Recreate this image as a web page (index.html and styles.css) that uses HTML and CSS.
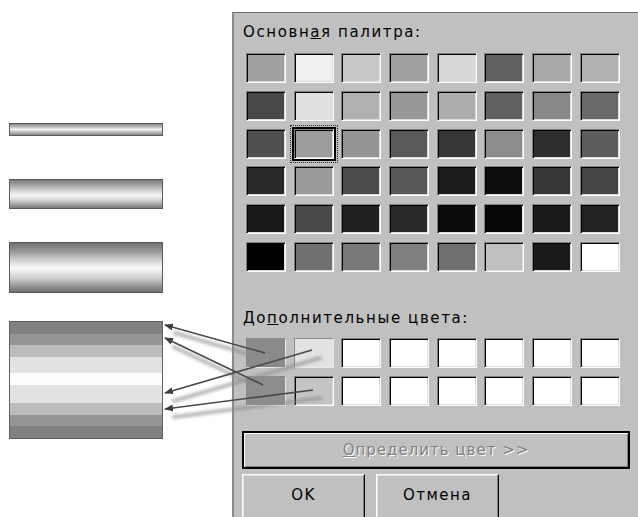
FILE: index.html
```html
<!DOCTYPE html>
<html lang="ru">

<head>
    <meta charset="utf-8" />
    <title>Цвет</title>
    <link rel="stylesheet" href="styles.css">
</head>

<body>
    <div class="page">
        <div class="bars">
            <div class="bar bar-xs"></div>
            <div class="bar bar-s"></div>
            <div class="bar bar-m"></div>
            <div class="bar bar-l"></div>
        </div>

        <div class="dialog">
            <div class="caption">Основн<u>а</u>я палитра:</div>
            <div class="grid basic">
                <!-- row 1 -->
                <div class="sw" style="background:#a0a0a0"></div>
                <div class="sw" style="background:#f0f0f0"></div>
                <div class="sw" style="background:#c8c8c8"></div>
                <div class="sw" style="background:#a0a0a0"></div>
                <div class="sw" style="background:#d8d8d8"></div>
                <div class="sw" style="background:#606060"></div>
                <div class="sw" style="background:#a8a8a8"></div>
                <div class="sw" style="background:#b0b0b0"></div>
                <!-- row 2 -->
                <div class="sw" style="background:#484848"></div>
                <div class="sw" style="background:#e0e0e0"></div>
                <div class="sw" style="background:#b0b0b0"></div>
                <div class="sw" style="background:#989898"></div>
                <div class="sw" style="background:#acacac"></div>
                <div class="sw" style="background:#606060"></div>
                <div class="sw" style="background:#888888"></div>
                <div class="sw" style="background:#686868"></div>
                <!-- row 3 -->
                <div class="sw" style="background:#505050"></div>
                <div class="sw sel" style="background:#9c9c9c"></div>
                <div class="sw" style="background:#949494"></div>
                <div class="sw" style="background:#5a5a5a"></div>
                <div class="sw" style="background:#363636"></div>
                <div class="sw" style="background:#8c8c8c"></div>
                <div class="sw" style="background:#2e2e2e"></div>
                <div class="sw" style="background:#5c5c5c"></div>
                <!-- row 4 -->
                <div class="sw" style="background:#282828"></div>
                <div class="sw" style="background:#9a9a9a"></div>
                <div class="sw" style="background:#4a4a4a"></div>
                <div class="sw" style="background:#585858"></div>
                <div class="sw" style="background:#1c1c1c"></div>
                <div class="sw" style="background:#0e0e0e"></div>
                <div class="sw" style="background:#363636"></div>
                <div class="sw" style="background:#444444"></div>
                <!-- row 5 -->
                <div class="sw" style="background:#181818"></div>
                <div class="sw" style="background:#484848"></div>
                <div class="sw" style="background:#202020"></div>
                <div class="sw" style="background:#282828"></div>
                <div class="sw" style="background:#0c0c0c"></div>
                <div class="sw" style="background:#060606"></div>
                <div class="sw" style="background:#1a1a1a"></div>
                <div class="sw" style="background:#222222"></div>
                <!-- row 6 -->
                <div class="sw" style="background:#000000"></div>
                <div class="sw" style="background:#707070"></div>
                <div class="sw" style="background:#787878"></div>
                <div class="sw" style="background:#808080"></div>
                <div class="sw" style="background:#6e6e6e"></div>
                <div class="sw" style="background:#c0c0c0"></div>
                <div class="sw" style="background:#1a1a1a"></div>
                <div class="sw" style="background:#ffffff"></div>
            </div>

            <div class="caption extra">До<u>п</u>олнительные цвета:</div>
            <div class="grid custom">
                <div class="sw flat" style="background:#8a8a8a"></div>
                <div class="sw flat" style="background:#e2e2e2"></div>
                <div class="sw"></div>
                <div class="sw"></div>
                <div class="sw"></div>
                <div class="sw"></div>
                <div class="sw"></div>
                <div class="sw"></div>
                <div class="sw flat" style="background:#8c8c8c"></div>
                <div class="sw" style="background:#c4c4c4"></div>
                <div class="sw"></div>
                <div class="sw"></div>
                <div class="sw"></div>
                <div class="sw"></div>
                <div class="sw"></div>
                <div class="sw"></div>
            </div>

            <button class="btn wide" disabled><u>О</u>пределить цвет &gt;&gt;</button>
            <div class="btn-row">
                <button class="btn">OK</button>
                <button class="btn">Отмена</button>
            </div>
        </div>
    </div>

    <!-- arrows from the custom colours to the big bar -->
    <svg class="arrows" width="638" height="517" viewBox="0 0 638 517">
        <defs>
            <filter id="blur" x="-20%" y="-20%" width="140%" height="140%">
                <feGaussianBlur stdDeviation="1.6" />
            </filter>
            <marker id="head" markerWidth="9" markerHeight="7" refX="8" refY="3.5" orient="auto"
                markerUnits="userSpaceOnUse">
                <path d="M0,0 L9,3.5 L0,7 Z" fill="#404040" />
            </marker>
        </defs>
        <g class="shadow" filter="url(#blur)">
            <line x1="273" y1="361" x2="175" y2="333" />
            <line x1="271" y1="393" x2="174" y2="347" />
            <line x1="320" y1="358" x2="174" y2="401" />
            <line x1="321" y1="398" x2="174" y2="417" />
        </g>
        <g class="arrow">
            <line x1="265" y1="353" x2="165" y2="325" marker-end="url(#head)" />
            <line x1="263" y1="385" x2="165" y2="338" marker-end="url(#head)" />
            <line x1="312" y1="350" x2="165" y2="393" marker-end="url(#head)" />
            <line x1="313" y1="390" x2="165" y2="409" marker-end="url(#head)" />
        </g>
    </svg>
</body>

</html>
```

FILE: styles.css
```css
body {
    margin: 0;
    background-color: #fff;
    font-family: "DejaVu Sans", sans-serif;
    font-size: 15px;
}

.page {
    display: flex;
    width: 638px;
    height: 517px;
    overflow: hidden;
}

/* left column: the gradient tubes */
.bars {
    width: 232px;
    flex: none;
    display: flex;
    flex-direction: column;
    padding-left: 9px;
    box-sizing: border-box;
}

.bar {
    width: 154px;
    box-sizing: border-box;
    border: 1px solid #5a5a5a;
}

.bar-xs {
    margin-top: 123px;
    height: 13px;
    background: linear-gradient(#8a8a8a, #c4c4c4 30%, #f4f4f4 50%, #c4c4c4 70%, #8a8a8a);
}

.bar-s {
    margin-top: 43px;
    height: 30px;
    background: linear-gradient(#7a7a7a, #a8a8a8 20%, #d8d8d8 40%, #f6f6f6 55%, #d8d8d8 70%, #a8a8a8 85%, #7a7a7a);
}

.bar-m {
    margin-top: 33px;
    height: 51px;
    background: linear-gradient(#707070, #9a9a9a 18%, #c8c8c8 32%, #e2e2e2 42%, #fafafa 52%, #e2e2e2 62%, #c8c8c8 74%, #9a9a9a 86%, #707070);
}

.bar-l {
    margin-top: 28px;
    height: 118px;
    border-color: #606060;
    background: linear-gradient(#808080 0 10%, #969696 10% 20%, #bcbcbc 20% 30%, #e2e2e2 30% 44%, #fefefe 44% 54%, #e2e2e2 54% 70%, #bcbcbc 70% 80%, #969696 80% 90%, #808080 90%);
}

/* the colour dialog */
.dialog {
    margin-top: 12px;
    width: 406px;
    height: 505px;
    flex: none;
    box-sizing: border-box;
    background-color: #c0c0c0;
    border-top: 1px solid #6a6a6a;
    border-left: 2px solid #8a8a8a;
    padding-left: 8px;
}

.caption {
    margin-top: 10px;
    margin-left: 1px;
    line-height: 18px;
    letter-spacing: 1.6px;
    color: #000;
}

.caption.extra {
    margin-top: 37px;
}

.grid {
    display: grid;
    grid-template-columns: repeat(8, 40px);
    grid-auto-rows: 30px;
    column-gap: 7.7px;
    row-gap: 7.8px;
    margin-left: 4px;
    margin-top: 12px;
}

.custom {
    margin-top: 11px;
}

.sw {
    position: relative;
    box-sizing: border-box;
    background-color: #fff;
    border: 1px solid;
    border-color: #808080 #fff #fff #808080;
    box-shadow: inset 1px 1px #000, inset -1px -1px #dcdcdc;
}

.sw.flat {
    border-color: #8a8a8a #eaeaea #eaeaea #8a8a8a;
    box-shadow: none;
}

.sw.sel {
    box-shadow: 0 0 0 2px #000, inset 1px 1px #000, inset -1px -1px #dcdcdc;
}

.sw.sel::after {
    content: "";
    position: absolute;
    inset: -5px;
    border: 1px dotted #303030;
}

/* buttons */
.btn {
    display: block;
    box-sizing: border-box;
    font-family: "DejaVu Sans", sans-serif;
    font-size: 15px;
    letter-spacing: 1px;
    color: #000;
    background-color: #c0c0c0;
    border: 1px solid;
    border-color: #fff #000 #000 #fff;
    box-shadow: inset -1px -1px #808080, inset 1px 1px #dfdfdf;
    padding: 0;
}

.btn.wide {
    margin-top: 25px;
    width: 388px;
    height: 38px;
    color: #808080;
    text-shadow: 1px 1px #fff;
    border: 2px solid;
    border-color: #000;
    box-shadow: inset 1px 1px #fff, inset -1px -1px #808080;
}

.btn-row {
    display: flex;
    gap: 11px;
    margin-top: 5px;
}

.btn-row .btn {
    width: 123px;
    height: 46px;
    padding-bottom: 4px;
    letter-spacing: 1.5px;
}

.arrows {
    position: absolute;
    top: 0;
    left: 0;
    pointer-events: none;
}

.shadow line {
    stroke: #8c8c8c;
    stroke-width: 4;
    stroke-linecap: round;
    opacity: 0.6;
}

.arrow line {
    stroke: #484848;
    stroke-width: 1.6;
}
```
